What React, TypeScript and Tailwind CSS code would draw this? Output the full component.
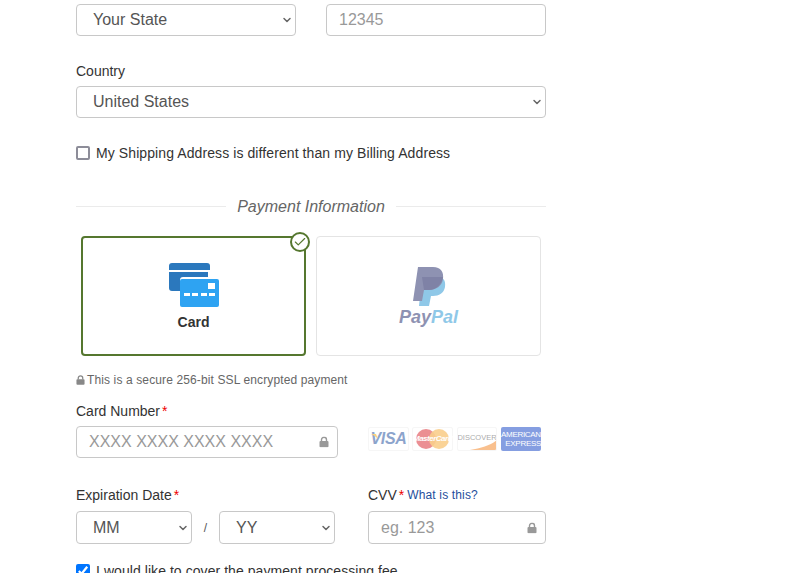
import { Check, ChevronDown } from "lucide-react";

const SelectBox = ({ value, className }: { value: string; className: string }) => {
    return (
        <div className={`relative ${className}`}>
            <select
                defaultValue={value}
                className="w-full h-full appearance-none bg-white border border-[#c8c8c8] rounded-[4px] pl-[16px] text-[16px] text-[#555] outline-none"
            >
                <option>{value}</option>
            </select>
            <ChevronDown
                size={12}
                strokeWidth={3}
                className="absolute right-[3px] top-1/2 -translate-y-1/2 text-[#666] pointer-events-none"
            />
        </div>
    );
};

const LockIcon = ({ className }: { className: string }) => (
    <svg width="10" height="11" viewBox="0 0 10 11" className={className}>
        <path d="M2.5 5V3.3a2.5 2.5 0 0 1 5 0V5" fill="none" stroke="currentColor" strokeWidth="1.4" />
        <rect x="0.5" y="4.6" width="9" height="6.2" rx="1" fill="currentColor" />
    </svg>
);

const TextBox = ({ placeholder, lock }: { placeholder: string; lock?: boolean }) => {
    return (
        <div className="relative w-full h-full">
            <input
                placeholder={placeholder}
                className="w-full h-full bg-white border border-[#c8c8c8] rounded-[4px] pl-[12px] text-[16px] text-[#555] placeholder:text-[#999] outline-none"
            />
            {lock && <LockIcon className="absolute right-[9px] top-1/2 -translate-y-1/2 text-[#999]" />}
        </div>
    );
};

const CardIcon = () => (
    <svg width="50" height="44" viewBox="0 0 50 44">
        <path d="M3 0h35a3 3 0 0 1 3 3v4H0V3a3 3 0 0 1 3-3z" fill="#2b78bd" />
        <path d="M0 9h39v5H14a3 3 0 0 0-3 3v11H3a3 3 0 0 1-3-3z" fill="#2b78bd" />
        <rect x="11" y="16" width="39" height="28" rx="2" fill="#2ea3f2" />
        <rect x="39" y="20" width="7" height="6" fill="#fff" />
        <rect x="15" y="30" width="6" height="3" fill="#fff" />
        <rect x="23" y="30" width="6" height="3" fill="#fff" />
        <rect x="32" y="30" width="6" height="3" fill="#fff" />
        <rect x="40" y="30" width="6" height="3" fill="#fff" />
    </svg>
);

const PayPalLogo = () => (
    <svg width="36" height="40" viewBox="0 0 36 40">
        <path d="M11 10h16c5 0 8 3 7 10-1 6-6 9-12 9h-2l-2 10h-10z" fill="#8fc8e8" />
        <path d="M7 0h15c8 0 11 5 10 12-1 7-7 11-14 11h-5l-2 11H2z" fill="#8e92b2" />
        <path d="M11 10h21c-1 7-7 13-14 13h-5z" fill="#7f82a6" />
    </svg>
);

const BrandLogos = () => (
    <div className="flex items-center h-[24px] opacity-50 font-['Liberation_Sans',sans-serif]">
        <div className="relative w-[41px] h-[24px] border border-[#eee] rounded-[2px] flex items-center justify-center text-[#1a4b9b] text-[16px] tracking-[-0.3px] font-bold italic">
            VISA
            <svg className="absolute left-[2px] top-[6px]" width="7" height="5" viewBox="0 0 7 5">
                <path d="M0 0h5l2 5C5 3 3 1 0 0z" fill="#f7a600" />
            </svg>
        </div>
        <div className="relative ml-[3px] w-[41px] h-[24px] border border-[#eee] rounded-[2px] flex items-center justify-center">
            <span className="absolute left-[3px] top-[1px] w-[20px] h-[20px] rounded-full bg-[#d9222a]" />
            <span className="absolute right-[3px] top-[1px] w-[20px] h-[20px] rounded-full bg-[#f59e1b] opacity-90" />
            <span className="relative text-white text-[8px] font-bold italic tracking-[-0.5px]">MasterCard</span>
        </div>
        <div className="relative ml-[4px] w-[40px] h-[24px] border border-[#eee] rounded-[2px] overflow-hidden flex justify-center pt-[6px] text-[#555] text-[7.5px] leading-[8px]">
            DISCOVER
            <svg className="absolute left-0 bottom-0" width="40" height="11" viewBox="0 0 40 11">
                <path d="M12 11C24 9 34 6 40 0v11z" fill="#f58220" />
            </svg>
        </div>
        <div className="ml-[4px] w-[40px] h-[24px] rounded-[2px] bg-[#0d3fc4] text-white text-[8px] leading-[9px] tracking-[-0.3px] pt-[3px] whitespace-nowrap">
            <div>AMERICAN</div>
            <div className="text-right">EXPRESS</div>
        </div>
    </div>
);

const Label = ({ text, required }: { text: string; required?: boolean }) => (
    <span className="block text-[14px] leading-[20px] text-[#333]">
        {text}
        {required && <span className="text-[#e00] ml-[2px]">*</span>}
    </span>
);

export default function App() {
    return (
        <div className="w-[800px] h-[573px] overflow-hidden bg-white font-['Liberation_Sans',Arial,sans-serif]">
            <div className="ml-[76px] w-[470px] pt-[4px]">
                {/* State and zip */}
                <div className="flex gap-[30px] h-[32px]">
                    <SelectBox value="Your State" className="w-[220px] h-[32px]" />
                    <div className="w-[220px]">
                        <TextBox placeholder="12345" />
                    </div>
                </div>

                {/* Country */}
                <div className="mt-[25px]">
                    <Label text="Country" />
                </div>
                <SelectBox value="United States" className="w-full h-[32px] mt-[5px]" />

                <div className="mt-[25px] flex items-center h-[20px] gap-[6px] text-[14px] text-[#333] tracking-[0.09px]">
                    <input type="checkbox" className="appearance-none w-[14px] h-[14px] border-2 border-[#8d8d99] rounded-[2px] bg-white" />
                    <span>My Shipping Address is different than my Billing Address</span>
                </div>

                {/* Payment Information heading */}
                <div className="mt-[31px] flex items-center h-[24px] gap-[11px]">
                    <div className="flex-1 h-px bg-[#ebebeb]" />
                    <span className="pt-[1px] text-[16px] italic text-[#666]">Payment Information</span>
                    <div className="flex-1 h-px bg-[#ebebeb]" />
                </div>

                {/* Payment method cards */}
                <div className="mt-[18px] px-[5px] flex gap-[10px]">
                    <div className="relative w-[225px] h-[120px] border-2 border-[#55772f] rounded-[4px] flex flex-col items-center pt-[25px]">
                        <CardIcon />
                        <span className="mt-[7px] text-[14px] leading-[16px] font-bold text-[#333]">Card</span>
                        <div className="absolute right-[-6px] top-[-6px] w-[20px] h-[20px] rounded-full bg-white border-2 border-[#55772f] flex items-center justify-center">
                            <Check size={14} strokeWidth={2} className="text-[#55772f]" />
                        </div>
                    </div>
                    <div className="w-[225px] h-[120px] border border-[#e4e4e4] rounded-[4px] flex flex-col items-center pt-[30px]">
                        <PayPalLogo />
                        <span className="text-[18px] leading-[20px] font-bold italic">
                            <span className="text-[#8e92b2]">Pay</span>
                            <span className="text-[#8fc8e8]">Pal</span>
                        </span>
                    </div>
                </div>

                <div className="mt-[16px] h-[16px] flex items-center gap-[2px] text-[12px] text-[#666] tracking-[0.12px]">
                    <LockIcon className="w-[9px] h-[10px] text-[#888]" />
                    <span>This is a secure 256-bit SSL encrypted payment</span>
                </div>

                {/* Card number */}
                <div className="mt-[13px]">
                    <Label text="Card Number" required />
                </div>
                <div className="mt-[5px] flex items-start h-[32px]">
                    <div className="w-[262px] h-[32px]">
                        <TextBox placeholder="XXXX XXXX XXXX XXXX" lock />
                    </div>
                    <div className="ml-[30px] mt-[1px]">
                        <BrandLogos />
                    </div>
                </div>

                {/* Expiry and CVV */}
                <div className="mt-[27px] flex">
                    <div className="w-[292px]">
                        <Label text="Expiration Date" required />
                        <div className="mt-[6px] flex items-center">
                            <SelectBox value="MM" className="w-[116px] h-[33px]" />
                            <span className="w-[27px] text-center text-[12px] text-[#555]">/</span>
                            <SelectBox value="YY" className="w-[116px] h-[33px]" />
                        </div>
                    </div>
                    <div className="w-[178px]">
                        <div className="h-[20px] flex items-center">
                            <Label text="CVV" required />
                            <span className="ml-[3px] text-[12px] text-[#1e4e9c] tracking-[0.15px]">What is this?</span>
                        </div>
                        <div className="mt-[6px] h-[33px]">
                            <TextBox placeholder="eg. 123" lock />
                        </div>
                    </div>
                </div>

                <div className="mt-[17px] flex items-center h-[20px] gap-[6px] text-[14px] text-[#333] tracking-[0.06px]">
                    <input type="checkbox" defaultChecked className="w-[14px] h-[14px] m-0 accent-[#0075ff]" />
                    <span>I would like to cover the payment processing fee</span>
                </div>
            </div>
        </div>
    );
}
